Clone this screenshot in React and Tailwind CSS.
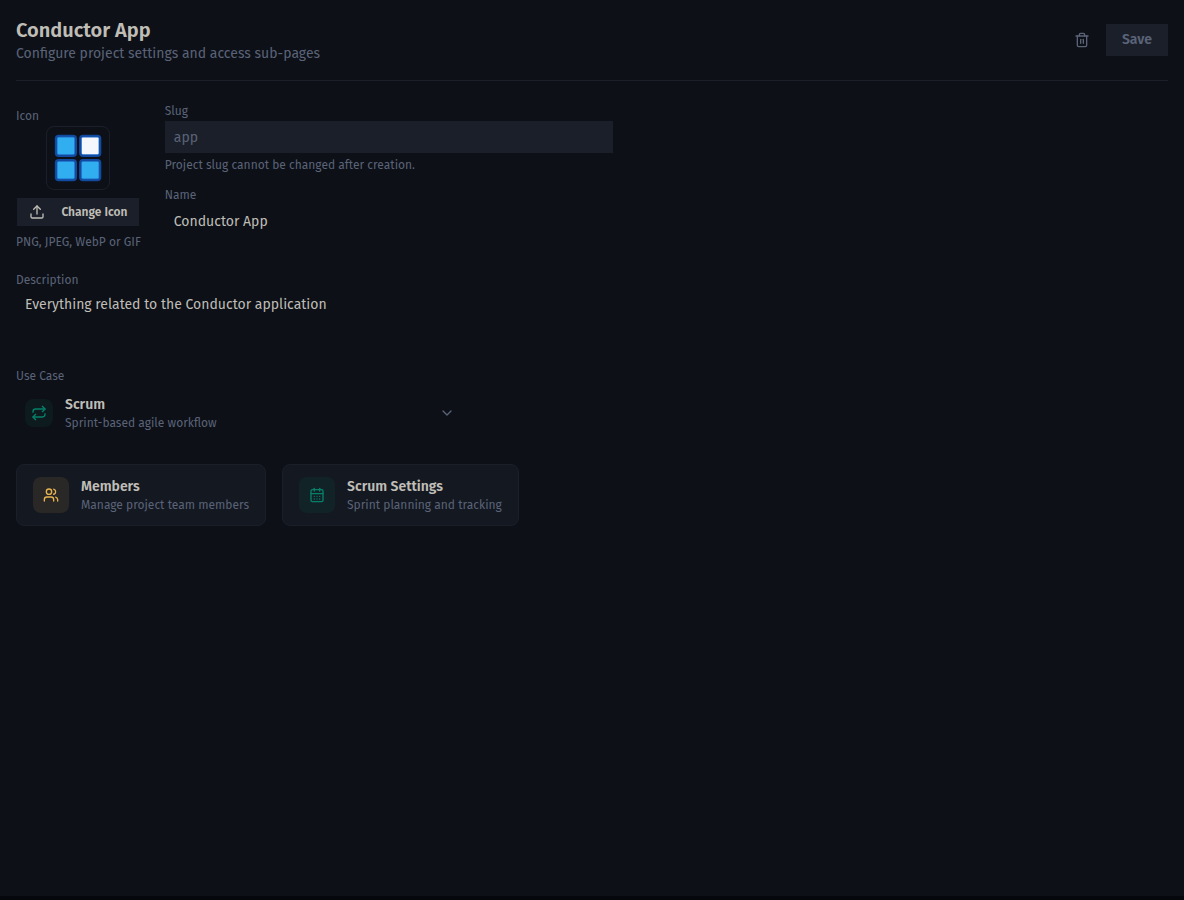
import { useState } from "react";
import { CalendarDays, ChevronDown, Repeat, Trash2, Upload, Users } from "lucide-react";

const labelClass = "text-xs leading-3 text-[#5a6378]";
const hintClass = "text-xs text-[#5a6378]";
const titleClass = "text-sm leading-5 font-semibold text-[#bfbdb6]";
const fieldClass = "h-8 w-full px-[9px] text-sm outline-none";

function ProjectIcon() {
  const tiles = [
    { x: 0, y: 0, fill: "#30aeef" },
    { x: 24.3, y: 0, fill: "#f4f8fc" },
    { x: 0, y: 24.2, fill: "#30aeef" },
    { x: 24.3, y: 24.2, fill: "#30aeef" },
  ];
  return (
    <svg width="48" height="48" viewBox="0 0 48 48" aria-hidden="true">
      {tiles.map((t) => (
        <g key={`${t.x}-${t.y}`} transform={`translate(${t.x} ${t.y})`}>
          <rect x="0.8" y="0.8" width="22.2" height="22.2" rx="4" fill="#124a9f" />
          <rect x="2.8" y="2.8" width="18.2" height="18.2" rx="2" fill="#1c69c6" />
          <rect x="3.5" y="3.5" width="16.8" height="16.8" rx="1" fill={t.fill} />
        </g>
      ))}
    </svg>
  );
}

function NavCard({ href, icon: Icon, tone, title, text }) {
  return (
    <a
      href={href}
      className="flex items-center gap-3 rounded-lg border border-[#1b1f29] bg-[#141821] px-4 py-3"
    >
      <span className={`flex size-9 items-center justify-center rounded-lg ${tone}`}>
        <Icon size={16} />
      </span>
      <span className="flex flex-col">
        <span className={titleClass}>{title}</span>
        <span className={hintClass}>{text}</span>
      </span>
    </a>
  );
}

export default function App() {
  const [name, setName] = useState("Conductor App");
  const [description, setDescription] = useState(
    "Everything related to the Conductor application"
  );

  return (
    <div className="flex min-h-screen flex-col border-b-4 border-[#06070c] bg-[#0d1017] px-4 font-['Fira_Sans','Roboto',sans-serif]">
      <header className="flex items-center justify-between border-b border-[#1b1f29] py-4">
        <div>
          <h1 className="text-xl leading-7 font-semibold text-[#bfbdb6]">Conductor App</h1>
          <p className="text-sm leading-5 text-[#5a6378]">
            Configure project settings and access sub-pages
          </p>
        </div>
        <div className="flex items-center gap-2">
          <button
            type="button"
            aria-label="Delete project"
            className="flex size-8 items-center justify-center text-[#5a6378]"
          >
            <Trash2 size={16} />
          </button>
          <button
            type="button"
            className="h-8 bg-[#1b1f29] px-4 text-sm font-semibold text-[#5a6378]"
          >
            Save
          </button>
        </div>
      </header>

      <main className="flex flex-col pt-6">
        <div className="flex items-start gap-6">
          <div className="flex flex-col items-center">
            <span className={`${labelClass} flex h-[21px] items-center self-start`}>Icon</span>
            <div className="flex size-16 items-center justify-center rounded-lg border border-[#1b1f29]">
              <ProjectIcon />
            </div>
            <button
              type="button"
              className="mt-2 flex h-7 items-center gap-4 bg-[#1b1f29] px-3 text-xs font-semibold text-[#bfbdb6]"
            >
              <Upload size={16} />
              Change Icon
            </button>
            <p className={`${hintClass} mt-2`}>PNG, JPEG, WebP or GIF</p>
          </div>

          <div className="flex w-full max-w-md flex-col gap-4">
            <div className="flex flex-col gap-1">
              <label htmlFor="slug" className={labelClass}>Slug</label>
              <input
                id="slug"
                value="app"
                readOnly
                className={`${fieldClass} bg-[#1b1f29] text-[#5a6378]`}
              />
              <p className={hintClass}>Project slug cannot be changed after creation.</p>
            </div>
            <div className="flex flex-col gap-1">
              <label htmlFor="name" className={labelClass}>Name</label>
              <input
                id="name"
                value={name}
                onChange={(e) => setName(e.target.value)}
                className={`${fieldClass} bg-transparent text-[#bfbdb6]`}
              />
            </div>
          </div>
        </div>

        <div className="mt-6 flex flex-col gap-1">
          <label htmlFor="description" className={labelClass}>Description</label>
          <textarea
            id="description"
            value={description}
            onChange={(e) => setDescription(e.target.value)}
            className="h-16 w-full max-w-2xl resize-none border border-transparent bg-transparent px-2 py-1 text-sm leading-5 text-[#bfbdb6] outline-none"
          />
        </div>

        <div className="mt-4 flex w-full max-w-md flex-col gap-1">
          <span id="use-case" className={labelClass}>Use Case</span>
          <button
            type="button"
            aria-labelledby="use-case use-case-value"
            aria-haspopup="listbox"
            className="flex items-center gap-3 border border-transparent p-2 text-left"
          >
            <span className="flex size-7 items-center justify-center rounded-lg bg-[#0d1a1e] text-[#06806a]">
              <Repeat size={16} />
            </span>
            <span id="use-case-value" className="flex flex-1 flex-col">
              <span className={titleClass}>Scrum</span>
              <span className={hintClass}>Sprint-based agile workflow</span>
            </span>
            <ChevronDown size={16} className="text-[#5a6378]" />
          </button>
        </div>

        <nav className="mt-6 flex flex-wrap gap-4">
          <NavCard
            href="#members"
            icon={Users}
            tone="bg-[#292826] text-[#e6b450]"
            title="Members"
            text="Manage project team members"
          />
          <NavCard
            href="#scrum"
            icon={CalendarDays}
            tone="bg-[#122328] text-[#06806a]"
            title="Scrum Settings"
            text="Sprint planning and tracking"
          />
        </nav>
      </main>
    </div>
  );
}
